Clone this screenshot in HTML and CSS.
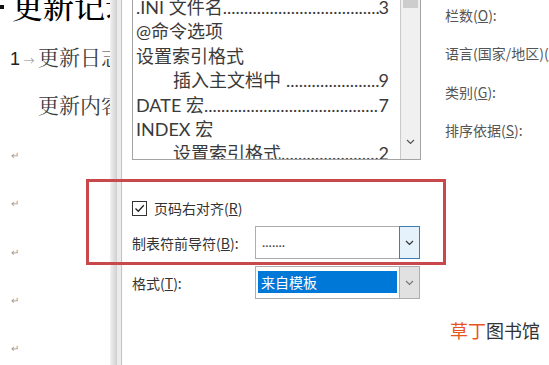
FILE: index.html
```html
<!DOCTYPE html>
<html lang="zh-CN">
<head>
  <meta charset="UTF-8" />
  <meta name="viewport" content="width=device-width, initial-scale=1.0" />
  <title>索引</title>
  <link rel="stylesheet" href="styles.css">
</head>
<body>
  <div class="page">
    <div class="doc">
      <div class="doc-title"><span class="bullet"></span><span class="title-text">更新记录</span></div>
      <p class="doc-line"><span class="num">1</span><span class="tab">→</span>更新日志</p>
      <p class="doc-line indent">更新内容</p>
      <p class="mark">↵</p>
      <p class="mark">↵</p>
      <p class="mark">↵</p>
      <p class="mark">↵</p>
      <p class="mark">↵</p>
    </div>

    <div class="frame"></div>

    <div class="dialog">
      <div class="top">
        <div class="preview">
          <div class="entries">
            <div class="entry">.INI 文件名<span class="dots"></span>3</div>
            <div class="entry">@命令选项</div>
            <div class="entry">设置索引格式</div>
            <div class="entry sub">插入主文档中<span class="dots spaced"></span>9</div>
            <div class="entry">DATE 宏<span class="dots"></span>7</div>
            <div class="entry">INDEX 宏</div>
            <div class="entry sub">设置索引格式<span class="dots"></span>2</div>
          </div>
          <div class="scrollbar">
            <div class="thumb"></div>
            <svg class="arrow" width="9" height="6" viewBox="0 0 9 6"><path d="M1 1l3.5 3.5L8 1" fill="none" stroke="#555" stroke-width="1.2"/></svg>
          </div>
        </div>

        <div class="options">
          <div class="opt">栏数(<u>O</u>):</div>
          <div class="opt">语言(国家/地区)(<u>L</u>):</div>
          <div class="opt">类别(<u>G</u>):</div>
          <div class="opt">排序依据(<u>S</u>):</div>
        </div>
      </div>

      <div class="row check-row">
        <span class="checkbox">
          <svg width="11" height="11" viewBox="0 0 11 11"><path d="M1.5 5.5l2.8 2.8L9.8 2.2" fill="none" stroke="#222" stroke-width="1.3"/></svg>
        </span>
        <span>页码右对齐(<u>R</u>)</span>
      </div>

      <div class="row field-row leader-row">
        <span class="label">制表符前导符(<u>B</u>):</span>
        <div class="select">
          <span class="value">.......</span>
          <span class="drop active">
            <svg width="9" height="6" viewBox="0 0 9 6"><path d="M1 1l3.5 3.5L8 1" fill="none" stroke="#333" stroke-width="1.2"/></svg>
          </span>
        </div>
      </div>

      <div class="row field-row format-row">
        <span class="label">格式(<u>T</u>):</span>
        <div class="select">
          <span class="value picked">来自模板</span>
          <span class="drop">
            <svg width="9" height="6" viewBox="0 0 9 6"><path d="M1 1l3.5 3.5L8 1" fill="none" stroke="#777" stroke-width="1.2"/></svg>
          </span>
        </div>
      </div>

      <div class="brand"><span class="accent">草丁</span>图书馆</div>
    </div>
  </div>

  <div class="highlight"></div>
</body>
</html>
```

FILE: styles.css
```css
body {
  margin: 0;
  width: 549px;
  height: 365px;
  overflow: hidden;
  background: #fff;
  position: relative;
  font-family: "Noto Sans CJK SC", sans-serif;
}

.page {
  display: flex;
  height: 365px;
}

/* document behind the dialog */

.doc {
  width: 110px;
  flex-shrink: 0;
  overflow: hidden;
  white-space: nowrap;
  font-family: "Noto Serif CJK SC", "Liberation Serif", serif;
  color: #3a3a3a;
}

.doc-title {
  display: flex;
  align-items: flex-start;
  margin-top: -11px;
  height: 29px;
  line-height: 31px;
  font-size: 31px;
  font-weight: 500;
  color: #000;
}

.bullet {
  flex-shrink: 0;
  width: 4px;
  height: 4px;
  margin: 16px 8px 0 0;
  background: #111;
}

.title-text {
  flex-shrink: 0;
}

.doc-line {
  margin: 0;
  height: 48px;
  line-height: 48px;
  font-size: 21px;
  padding-left: 38px;
}

.doc-line:first-of-type {
  margin-top: 14px;
}

.doc-line .num {
  margin-left: -28px;
  font-family: "Liberation Sans", sans-serif;
  font-size: 18px;
  color: #222;
}

.doc-line .tab {
  display: inline-block;
  width: 18px;
  text-align: center;
  font-size: 11px;
  color: #888;
}

.mark {
  margin: 0;
  height: 48.3px;
  line-height: 48px;
  padding-left: 11px;
  font-size: 10px;
  color: #999;
}

.doc-line.indent + .mark {
  margin-top: 3px;
}

/* dialog edge */

.frame {
  width: 13px;
  flex-shrink: 0;
  background: linear-gradient(to right,
    #f2f2f2 0, #dedede 4px, #cfcfcf 7px,
    #ebebeb 7px, #ebebeb 11px,
    #c4c4c4 11px, #c4c4c4 12px,
    #fbfbfb 12px);
}

.dialog {
  flex: 1;
  display: flex;
  flex-direction: column;
  padding-left: 9px;
  overflow: hidden;
  color: #333;
}

.top {
  display: flex;
  align-items: flex-start;
}

.preview {
  display: flex;
  width: 289px;
  height: 166px;
  margin-top: -6px;
  flex-shrink: 0;
  box-sizing: border-box;
  border: 1px solid #a3a3a3;
  overflow: hidden;
}

.entries {
  flex: 1;
  min-width: 0;
  padding: 0 11px 0 3px;
  border-right: 1px solid #c9c9c9;
  font-family: Lato, "Noto Sans CJK SC", sans-serif;
  font-size: 18px;
  line-height: 24.4px;
  color: #3a3a3a;
}

.entry {
  display: flex;
  white-space: nowrap;
}

.entry.sub {
  padding-left: 37px;
}

.dots {
  flex: 1;
  overflow: hidden;
}

.dots.spaced {
  padding-left: 5px;
}

.dots::before {
  content: "................................................................................";
}

.scrollbar {
  width: 19px;
  position: relative;
  background: #f0f0f0;
}

.thumb {
  margin: 0 2px;
  height: 13px;
  background: #cdcdcd;
}

.scrollbar .arrow {
  position: absolute;
  left: 5px;
  bottom: 14px;
}

.options {
  margin-left: 24px;
  margin-top: -4px;
  white-space: nowrap;
  font-size: 14px;
  color: #555;
}

.opt {
  height: 38.3px;
  line-height: 38.3px;
}

/* form rows */

.row {
  display: flex;
  align-items: center;
  font-size: 14px;
  color: #333;
  white-space: nowrap;
}

.check-row {
  margin-top: 38px;
  height: 20px;
}

.checkbox {
  display: flex;
  align-items: center;
  justify-content: center;
  width: 13px;
  height: 13px;
  margin-right: 7px;
  border: 1px solid #333;
}

.leader-row {
  margin-top: 8px;
}

.format-row {
  margin-top: 7px;
}

.label {
  width: 123px;
}

.select {
  display: flex;
  width: 165px;
  height: 33px;
  box-sizing: border-box;
  border: 1px solid #adadad;
}

.select .value {
  flex: 1;
  padding-left: 6px;
  line-height: 29px;
  font-family: Lato, sans-serif;
  font-size: 14px;
  color: #444;
}

.select .value.picked {
  margin: 4px 2px 5px 2px;
  padding-left: 3px;
  line-height: 22px;
  background: #0078d7;
  color: #fff;
  font-family: "Noto Sans CJK SC", sans-serif;
  font-size: 14px;
}

.drop {
  width: 19px;
  display: flex;
  align-items: center;
  justify-content: center;
  background: #e1e1e1;
  border-left: 1px solid #adadad;
}

.drop.active {
  background: #e5f1fb;
  border: 1px solid #3c7fb1;
  margin: -1px -1px -1px 0;
}

.brand {
  align-self: flex-end;
  margin-top: 18px;
  margin-right: 9px;
  font-size: 18px;
  color: #333;
}

.brand .accent {
  color: #e8551f;
}

/* red annotation frame over the screenshot */

.highlight {
  position: absolute;
  left: 86px;
  top: 179px;
  width: 360px;
  height: 86px;
  box-sizing: border-box;
  border: 3px solid #c8484b;
}
```
